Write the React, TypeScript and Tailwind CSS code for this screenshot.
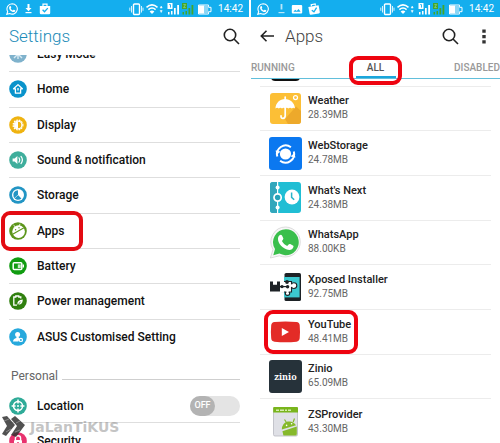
import React from 'react';

const settings = [
  { name: 'Easy Mode', icon: <EasyModeIcon /> },
  { name: 'Home', icon: <HomeIcon /> },
  { name: 'Display', icon: <DisplayIcon /> },
  { name: 'Sound & notification', icon: <SoundIcon /> },
  { name: 'Storage', icon: <StorageIcon /> },
  { name: 'Apps', icon: <AppsIcon />, marked: true },
  { name: 'Battery', icon: <BatteryIcon /> },
  { name: 'Power management', icon: <PowerIcon /> },
  { name: 'ASUS Customised Setting', icon: <CustomIcon /> },
];

const apps = [
  { name: 'Weather', size: '28.39MB', icon: <WeatherIcon /> },
  { name: 'WebStorage', size: '24.78MB', icon: <WebStorageIcon /> },
  { name: "What's Next", size: '24.38MB', icon: <WhatsNextIcon /> },
  { name: 'WhatsApp', size: '88.00KB', icon: <WhatsAppIcon /> },
  { name: 'Xposed Installer', size: '92.75MB', icon: <XposedIcon /> },
  { name: 'YouTube', size: '48.41MB', icon: <YouTubeIcon />, marked: true },
  { name: 'Zinio', size: '65.09MB', icon: <ZinioIcon /> },
  { name: 'ZSProvider', size: '43.30MB', icon: <AndroidPackageIcon /> },
];

/* Round icons of the settings list, drawn on an 18 unit grid */

function Disc({ color, children }: { color: string; children: React.ReactNode }) {
  return (
    <svg viewBox="0 0 18 18" className="size-[18px] shrink-0" aria-hidden="true">
      <circle cx="9" cy="9" r="8.8" fill={color} />
      {children}
    </svg>
  );
}

function EasyModeIcon() {
  return (
    <Disc color="#7fb2cc">
      <path d="M5 5l8 8M13 5l-8 8M9 4v10" stroke="#d8eaf3" strokeWidth="1.4" fill="none" />
    </Disc>
  );
}

function HomeIcon() {
  return (
    <Disc color="#0a93cb">
      <path d="M9 4.600L4.600 8.800h1.800v4.400h5.200V8.800h1.800z" fill="none" stroke="#fff" strokeWidth="1.3" strokeLinejoin="round" />
      <path d="M9 8v2.600" stroke="#fff" strokeWidth="1.3" />
    </Disc>
  );
}

function DisplayIcon() {
  return (
    <Disc color="#efb310">
      <circle cx="9" cy="9" r="4.9" fill="none" stroke="#fff" strokeWidth="1.2" strokeDasharray="1.6 1" />
      <circle cx="9" cy="9" r="3.9" fill="none" stroke="#fff" strokeWidth="1.2" />
      <path d="M9 5.400a3.600 3.600 0 0 0 0 7.200z" fill="#fff" />
    </Disc>
  );
}

function SoundIcon() {
  return (
    <Disc color="#3fae9c">
      <path d="M3.600 7.400h2L8.400 5v8L5.600 10.600h-2z" fill="#fff" />
      <path d="M10 6.800q1.600 2.200 0 4.400M12 5.400q2.800 3.600 0 7.200" fill="none" stroke="#fff" strokeWidth="1.2" strokeLinecap="round" />
    </Disc>
  );
}

function StorageIcon() {
  return (
    <Disc color="#2295c4">
      <circle cx="9" cy="9" r="6" fill="#fff" />
      <path d="M9 4.200V9l3.400 3.400A4.800 4.800 0 1 1 9 4.200z" fill="#2295c4" />
      <path d="M9 9L5.400 12.400" stroke="#fff" strokeWidth=".6" />
    </Disc>
  );
}

function AppsIcon() {
  return (
    <Disc color="#5c961b">
      <circle cx="9.600" cy="9.600" r="6.300" fill="#fff" />
      <path d="M3.600 12.200L15 5.800" stroke="#5c961b" strokeWidth="1.1" />
      <path d="M4.600 2.800l1.600 2.400M11 1.800l-.8 2.400" stroke="#fff" strokeWidth=".8" />
      <circle cx="6.600" cy="7.800" r=".7" fill="#5c961b" />
      <circle cx="10" cy="5.800" r=".7" fill="#5c961b" />
    </Disc>
  );
}

function BatteryIcon() {
  return (
    <Disc color="#119c11">
      <rect x="4.2" y="5.8" width="8.6" height="6.8" rx="1" fill="none" stroke="#fff" strokeWidth="1.5" />
      <path d="M8.800 7.400h3v3.600h-3z" fill="#c8eac8" />
      <path d="M13.600 7.600h1.400v3h-1.400z" fill="#fff" />
    </Disc>
  );
}

function PowerIcon() {
  return (
    <Disc color="#30800f">
      <path d="M8 13.200H4.800V5h2V4h3v1h2v1.600" fill="none" stroke="#fff" strokeWidth="1.3" />
      <path d="M8.400 12.600q-.6-4.800 5.400-5.200 0 5.400-5.400 5.200z" fill="#fff" />
      <path d="M8 14l3.600-4.400" stroke="#30800f" strokeWidth=".7" />
    </Disc>
  );
}

function CustomIcon() {
  return (
    <Disc color="#27a9dd">
      <circle cx="8.6" cy="6.4" r="2.5" fill="#fff" />
      <path d="M4 13.400q.2-2.600 3.400-3.400V8.400h2.400V10l1 .6-1.400 2.800z" fill="#fff" />
      <circle cx="11.9" cy="11.9" r="1.6" fill="none" stroke="#fff" strokeWidth="1.2" />
    </Disc>
  );
}

function LocationIcon() {
  return (
    <Disc color="#2fab98">
      <circle cx="9" cy="9" r="4.5" fill="none" stroke="#fff" strokeWidth="1.5" />
      <path d="M9 2.600v4M9 11.400v4M2.600 9h4M11.400 9h4" stroke="#fff" strokeWidth="1.5" />
      <circle cx="9" cy="9" r="1" fill="#fff" />
    </Disc>
  );
}

function SecurityIcon() {
  return (
    <Disc color="#e8326e">
      <path d="M6.400 8V6.400a2.600 2.600 0 0 1 5.200 0V8" fill="none" stroke="#fff" strokeWidth="1.4" />
      <rect x="5" y="8" width="8" height="6" rx="1" fill="#fff" />
      <path d="M9 10v2" stroke="#e8326e" strokeWidth="1.4" />
    </Disc>
  );
}

/* App icons, drawn on a 33 unit grid */

function AppIcon({ children }: { children: React.ReactNode }) {
  return (
    <svg viewBox="0 0 33 33" className="size-[33px] shrink-0" aria-hidden="true">
      {children}
    </svg>
  );
}

function WeatherIcon() {
  return (
    <AppIcon>
      <rect x="1" y="1" width="31" height="31" rx="3" fill="#fcbf36" />
      <path d="M27 14.5L32 19v10a3 3 0 0 1-3 3H19l-3-5z" fill="#eda92b" />
      <path d="M6.4 16.6C6.8 10.6 11 7 16 7s9.6 3.6 10 9.6q-1.4-1.6-3.2-.2-1.8-1.4-3.4 0-1.6-1.2-3.2 0-1.6-1.2-3.2 0-1.6-1.4-3.2 0-1.8-1.4-3.4.2z" fill="#fff" />
      <path d="M16.2 5v18.6q0 2.8-2.2 2.8T12 23.8" fill="none" stroke="#fff" strokeWidth="1.7" strokeLinecap="round" />
      <circle cx="26.5" cy="5.6" r="2" fill="none" stroke="#fff" strokeWidth="1.2" />
    </AppIcon>
  );
}

function WebStorageIcon() {
  return (
    <AppIcon>
      <rect width="33" height="33" rx="3" fill="#0b78f0" />
      <circle cx="16.5" cy="17" r="5.6" fill="#fff" />
      <path d="M8.3 19.5a8.7 8.7 0 0 1 13.6-9.3M24.8 14.5a8.7 8.7 0 0 1-13.7 9.3" fill="none" stroke="#fff" strokeWidth="2" />
      <path d="M6.6 13.6l5 1-4 3.4zM26.4 20.4l-5-1 4-3.4z" fill="#fff" />
    </AppIcon>
  );
}

function WhatsNextIcon() {
  return (
    <AppIcon>
      <rect x="1" y="1" width="31" height="31" rx="3" fill="#20bed4" />
      <path d="M1 4a3 3 0 0 1 3-3h4.6v31H4a3 3 0 0 1-3-3z" fill="#32a7bc" />
      <path d="M8.6 1v31" stroke="#fff" strokeWidth="1.2" />
      <circle cx="8.6" cy="6.6" r="2" fill="#fff" />
      <circle cx="8.6" cy="26.4" r="2" fill="#fff" />
      <circle cx="8.6" cy="16.5" r="3.6" fill="#27a2b8" stroke="#fff" strokeWidth="1.7" />
      <circle cx="23" cy="16" r="7.4" fill="#fff" />
      <path d="M22.6 11.6v4.8l2.6 2.4" fill="none" stroke="#29b5ca" strokeWidth="1.5" />
    </AppIcon>
  );
}

const handset =
  'M10.6 9.2c.8-.8 1.9-.7 2.4.3l1.2 2.6c.3.7.1 1.2-.4 1.8l-.9 1.1c1.2 2.3 3 4 5.3 5l1.4-1.5c.5-.6 1-.7 1.6-.4l2.7 1.4c.6.3.7.7.5 1.5-.5 1.9-2.4 3-4.2 2.9C14 23.5 8.4 17 9 12.3c.1-1.3.8-2.4 1.6-3.1z';

function WhatsAppIcon() {
  return (
    <AppIcon>
      <path d="M16.8 1A14.8 14.8 0 0 0 4 23.4L1.4 32l9-2.200A15 15 0 1 0 16.8 1z" fill="#f7f7f7" stroke="#d4d4d4" strokeWidth=".8" />
      <path d="M16.9 3.2A13 13 0 0 0 6 23l-1.700 6.200 6.200-1.600a13 13 0 1 0 6.400-24.4z" fill="#3abf4c" />
      <path d={handset} fill="#fff" />
    </AppIcon>
  );
}

function XposedIcon() {
  return (
    <AppIcon>
      <rect x="15.5" y="2" width="16.5" height="28" rx="1.6" fill="#1d2226" />
      <rect x="15" y="6" width="15.6" height="20.4" fill="#3cc8cf" />
      <path d="M13 10.500h9.500v2.800q.4-1.600 2.400-1.600 2.900 0 2.900 2.900t-2.900 2.900q-2 0-2.400-1.600V21h-2.800q1 .4 1 1.600 0 1.800-2.200 1.800t-2.200-1.800q0-1.200 1-1.600H13z" fill="#fff" stroke="#1d2226" strokeWidth="1.1" />
      <path d="M12 9.500h3v12.400h-3z" fill="#fff" />
      <path d="M1 10.500h3v3.200h4v-3.200h3v10H1z" fill="#1d2226" />
      <path d="M10 15.600h8" stroke="#1d2226" strokeWidth="1.2" />
      <circle cx="13" cy="15.600" r="1.700" fill="#1d2226" />
      <circle cx="18" cy="11" r="1.900" fill="#1d2226" />
      <circle cx="18.600" cy="15.800" r="1.700" fill="#1d2226" />
    </AppIcon>
  );
}

function YouTubeIcon() {
  return (
    <AppIcon>
      <path d="M5.500 7q11-1 22 0 3 .3 3.200 3.300.6 6.700 0 13-.3 3-3.200 3.400-11 1-22 0-3-.3-3.300-3.400-.6-6.500 0-13Q2.500 7.300 5.500 7z" fill="#e32b27" />
      <path d="M12.800 12.900v8l7.200-4z" fill="#fff" />
    </AppIcon>
  );
}

function ZinioIcon() {
  return (
    <span className="flex size-[33px] shrink-0 items-center justify-center rounded-[3px] bg-[#26323a] font-['Noto_Serif','DejaVu_Serif',serif] text-[9px] font-bold text-white">
      zinio
    </span>
  );
}

function AndroidPackageIcon() {
  return (
    <AppIcon>
      <path d="M4.5 3h24v26.500q0 1.500-1.500 1.500H6q-1.500 0-1.500-1.500z" fill="#dfe0e6" stroke="#b7b9c0" strokeWidth=".8" />
      <path d="M5 2h23q1 0 1 1v4.600H4.200V3q0-1 .8-1z" fill="#79b51c" />
      <path d="M7 5.200h3m1 0h4m1 0h2m1 0h3" stroke="#d6ecb0" strokeWidth="1.6" />
      <path d="M12.800 24.600Q13.200 18 18.600 16.600q5.600-1 8.400 3.600z" fill="#86b92b" />
      <path d="M13.400 26.200l14.400-4.600V29q0 1.600-1.600 1.600H15.400q-2 0-1.200-1.400z" fill="#86b92b" />
      <path d="M15.500 14.500l2 3M25.500 13.500l-1.300 3.500" stroke="#86b92b" strokeWidth="1.2" />
      <circle cx="17.6" cy="20.400" r=".8" fill="#fff" />
      <circle cx="22.600" cy="18.800" r=".8" fill="#fff" />
    </AppIcon>
  );
}

/* Status bar glyphs */

function ChatGlyph() {
  return (
    <svg viewBox="0 0 12 12" className="size-3" aria-hidden="true">
      <path d="M6.200.7a5.200 5.200 0 0 0-4.500 7.800L.8 11.300l2.900-.8A5.200 5.200 0 1 0 6.200.7z" fill="none" stroke="#fff" strokeWidth="1.1" />
      <path d={handset} fill="#fff" transform="translate(-.5 -.5) scale(.4)" />
    </svg>
  );
}

function DownloadGlyph({ faint }: { faint?: boolean }) {
  return (
    <svg viewBox="0 0 7 10" className={faint ? 'h-[10px] w-[7px] opacity-70' : 'h-[10px] w-[7px]'} aria-hidden="true">
      <path d={faint ? 'M2.600 0h1.800v5.500H2.600z' : 'M2.500 0h2v4h2L3.500 7.300.5 4h2z'} fill="#fff" />
      <path d="M.5 8.600h6" stroke="#fff" strokeWidth="1.2" />
    </svg>
  );
}

function BagGlyph({ tilted }: { tilted?: boolean }) {
  return (
    <svg viewBox="0 0 12 12" className="size-3" aria-hidden="true">
      <g transform={tilted ? 'rotate(-10 6 6)' : undefined}>
        <path d="M.8 3h10.400v7q0 1.200-1.200 1.200H2Q.8 11.200.8 10z" fill="#fff" />
        <path d="M4 3V1.200h4V3" fill="none" stroke="#fff" strokeWidth="1.2" />
        <path d="M3.600 6.800l1.900 1.900 3.300-3.600" fill="none" stroke="#14aeee" strokeWidth="1.3" />
      </g>
    </svg>
  );
}

function PictureGlyph() {
  return (
    <svg viewBox="0 0 12 12" className="size-3" aria-hidden="true">
      <rect x=".8" y="2" width="10.4" height="8.4" rx="1" fill="#fff" />
      <path d="M2.400 8.800l1.800-2 1.500 1.200L7.600 6l2 2.800z" fill="#14aeee" />
    </svg>
  );
}

function SystemGlyphs() {
  return (
    <svg viewBox="0 0 84 14" className="h-[14px] w-[84px]" aria-hidden="true">
      <rect x="4.5" y="2" width="6" height="10.5" rx="1" fill="none" stroke="#fff" strokeWidth="1.4" />
      <path d="M2.500 4v6.500M12.500 4v6.500M.8 5.600v3.200M14 5.600v3.200" stroke="#d4f1fd" strokeWidth="1" />
      <path d="M17.500 5.400q5.500-5 11 0M19.400 7.600q3.600-3.200 7.200 0" fill="none" stroke="#fff" strokeWidth="1.5" />
      <path d="M20.600 9.400q2.400-1.800 4.800 0L23 12z" fill="#fff" />
      <path d="M31.200 6h2l-1-2zM31.200 8.500h2l-1 2z" fill="#fff" stroke="#fff" strokeWidth=".5" />
      <path d="M38.500 1h5v6h-5zM39 10h1.500v2.500H39zM42 9h1.500v3.500H42zM45 6h1.700v6.500H45zM48.200 3h1.800v9.500h-1.800z" fill="#fff" />
      <path d="M40.200 2.600h1.300v3" fill="none" stroke="#14aeee" strokeWidth=".9" />
      <path d="M53 1h5v6h-5zM53.500 10H55v2.500h-1.500zM56.500 9H58v3.500h-1.500zM59.500 6h1.700v6.500h-1.700zM62.500 3h1.800v9.500h-1.800z" fill="#43a62b" />
      <path d="M54.400 2.600h2.200L54.600 5.600h2.200" fill="none" stroke="#8ed08c" strokeWidth=".8" />
      <path d="M69.500 3h10v2.300H82v4.400h-2.500V12h-10z" fill="none" stroke="#fff" strokeWidth="1" />
      <path d="M70 3.500h5.500v8H70z" fill="#fff" />
      <path d="M75.500 3.500h3.800v8h-3.800z" fill="#8ad6f6" />
    </svg>
  );
}

function StatusBar({ children }: { children: React.ReactNode }) {
  return (
    <div className="flex h-[17px] shrink-0 items-center justify-between bg-[#14aeee] px-[6px]">
      <div className="flex items-center">{children}</div>
      <div className="flex items-center gap-[5px]">
        <SystemGlyphs />
        <span className="text-[10px] leading-[14px] text-white">14:42</span>
      </div>
    </div>
  );
}

function SearchButton() {
  return (
    <button type="button" aria-label="Search">
      <svg viewBox="0 0 17 17" className="size-[17px]" fill="none" stroke="#222" strokeWidth="1.6">
        <circle cx="7" cy="7" r="5.7" />
        <path d="M11 11l5 5" />
      </svg>
    </button>
  );
}

function Marker({ className }: { className: string }) {
  return <span className={`pointer-events-none absolute z-10 rounded-[9px] border-4 ${className}`} />;
}

function SettingsPanel() {
  return (
    <section className="relative flex min-w-0 flex-col overflow-hidden">
      <StatusBar>
        <span className="mr-[7px]"><ChatGlyph /></span>
        <span className="mr-[7px]"><DownloadGlyph /></span>
        <BagGlyph />
      </StatusBar>
      <header className="flex h-[38px] shrink-0 items-center justify-between px-[9px]">
        <h1 className="text-[17px] leading-6 font-light text-[#1b8bb8]">Settings</h1>
        <SearchButton />
      </header>

      <div className="min-h-0 flex-1 overflow-hidden px-[9px]">
        {/* List is scrolled so the first row is cut by the header */}
        <ul className="-mt-[18px] grid h-[318px] auto-rows-fr">
          {settings.map((item) => (
            <li key={item.name} className="relative border-b border-[#dedede] last:border-0">
              <button type="button" className="flex h-full w-full items-center gap-[10px] text-left">
                {item.icon}
                <span className="text-[12px] leading-4 font-medium text-[#111]">{item.name}</span>
              </button>
              {item.marked && <Marker className="-inset-y-[3px] -left-2 w-[82px] border-[#e30b12]" />}
            </li>
          ))}
        </ul>

        <div className="flex h-[34px] items-end gap-1 pb-[5px] pl-[2px]">
          <h2 className="text-[12px] leading-4 text-[#666]">Personal</h2>
          <span className="mb-[4px] h-px flex-1 bg-[#cfcfcf]" />
        </div>
        <div className="flex h-[34px] items-center justify-between border-b border-[#dedede]">
          <label htmlFor="location" className="flex items-center gap-[10px] text-[12px] leading-4 font-medium text-[#111]">
            <LocationIcon />
            Location
          </label>
          <span className="relative flex h-5 w-[50px] rounded-full bg-[#e4e4e4]">
            <input id="location" type="checkbox" role="switch" className="absolute inset-0 size-full appearance-none rounded-full" />
            <span className="pointer-events-none flex h-5 w-[25px] items-center justify-center rounded-full bg-[#b3b3b3] text-[9px] font-medium text-white">
              OFF
            </span>
          </span>
        </div>
        <button type="button" className="flex h-[35px] w-full items-center gap-[10px] text-left">
          <SecurityIcon />
          <span className="text-[12px] leading-4 font-medium text-[#111]">Security</span>
        </button>
      </div>

      {/* Watermark */}
      <div className="pointer-events-none absolute bottom-[5px] left-[1px] flex items-center gap-1">
        <svg viewBox="0 0 25 23" className="h-[23px] w-[25px]" aria-hidden="true">
          <path d="M1 2l5-1 8 9-9 11-4-2 5-8zM10 4l4-3 10 9-9 12-5-2 6-9z" fill="#333" opacity=".85" />
          <path d="M3 6l5-2M5 17l5-3M15 8l4-2M14 17l5-2" stroke="#888" strokeWidth="1" />
        </svg>
        <span className="font-['DejaVu_Sans',sans-serif] text-[14px] leading-4 font-bold text-[#8a8a8a]/50">JaLanTiKUS</span>
      </div>
    </section>
  );
}

function AppsPanel() {
  return (
    <section className="flex min-w-0 flex-col overflow-hidden">
      <StatusBar>
        <span className="mr-[9px]"><ChatGlyph /></span>
        <span className="mr-[6px]"><DownloadGlyph faint /></span>
        <span className="mr-[5px]"><PictureGlyph /></span>
        <BagGlyph tilted />
      </StatusBar>
      <header className="flex h-[38px] shrink-0 items-center px-[9px]">
        <button type="button" aria-label="Back" className="mr-[11px]">
          <svg viewBox="0 0 14 12" className="h-3 w-[14px]" fill="none" stroke="#222" strokeWidth="1.6">
            <path d="M6.500.8L1.300 6l5.200 5.200M1.300 6H14" />
          </svg>
        </button>
        <h1 className="flex-1 text-[17px] leading-6 font-light text-[#444]">Apps</h1>
        <SearchButton />
        <button type="button" aria-label="More options" className="mr-[5px] ml-[23px]">
          <svg viewBox="0 0 4 15" className="h-[15px] w-1" fill="#333">
            <path d="M.3.5h3.400v3.300H.3zM.3 5.900h3.400v3.300H.3zM.3 11.300h3.400v3.300H.3z" />
          </svg>
        </button>
      </header>

      <nav role="tablist" className="relative z-10 grid h-6 shrink-0 grid-cols-3 border-b border-[#62bfdb] pt-[2px] text-[10px] leading-4 font-medium text-[#999]">
        <button type="button" role="tab" aria-selected="false" className="text-left">RUNNING</button>
        <button type="button" role="tab" aria-selected="true" className="relative flex items-center justify-center text-[#555]">
          ALL
          <span className="absolute bottom-0 h-[2px] w-10 bg-[#1ba6dc]" />
          <Marker className="-top-px -bottom-[7px] w-[53px] border-[#ee0410]" />
        </button>
        <button type="button" role="tab" aria-selected="false" className="text-right">DISABLED</button>
      </nav>

      <div className="min-h-0 flex-1 overflow-hidden px-[9px]">
        <ul className="-mt-[37px] grid h-[402px] auto-rows-fr">
          <li className="flex items-end border-b border-[#ececec] pb-[5px] pl-[11px]">
            <span className="h-[28px] w-[29px] rounded-[4px] bg-[#111]" />
          </li>
          {apps.map((app) => (
            <li key={app.name} className="relative border-b border-[#ececec] last:border-0">
              <button type="button" className="flex h-full w-full items-center gap-[6px] pl-[9px] text-left">
                {app.icon}
                <span className="flex flex-col">
                  <span className="text-[11px] leading-[14px] font-medium text-[#222]">{app.name}</span>
                  <span className="text-[10px] leading-[14px] text-[#666]">{app.size}</span>
                </span>
              </button>
              {app.marked && <Marker className="inset-y-0 left-1 w-[94px] border-[#ee0410]" />}
            </li>
          ))}
        </ul>
      </div>
    </section>
  );
}

export default function App() {
  return (
    <main className="grid h-screen grid-cols-2 gap-[2px] overflow-hidden bg-white font-[Roboto,'Liberation_Sans',sans-serif]">
      <SettingsPanel />
      <AppsPanel />
    </main>
  );
}
